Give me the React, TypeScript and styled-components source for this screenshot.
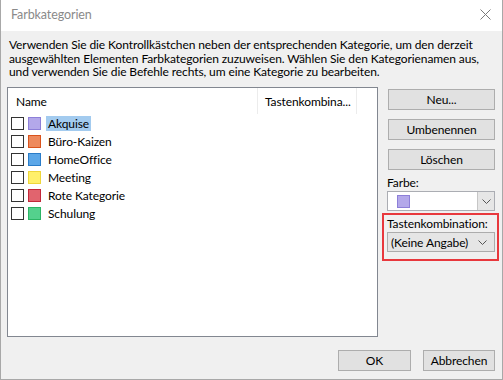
import styled, { createGlobalStyle } from "styled-components";

const GlobalStyle = createGlobalStyle`
    html, body {
        margin: 0;
        padding: 0;
        background: #ffffff;
    }
    * {
        box-sizing: border-box;
    }
`

const Window = styled.div`
    display: flex;
    flex-direction: column;
    width: 503px;
    height: 380px;
    border: 1px solid #a8a8a8;
    border-top: none;
    font-family: Lato, "Liberation Sans", sans-serif;
    font-size: 12px;
    letter-spacing: -0.1px;
    color: #000;
    overflow: hidden;
`

const TitleBar = styled.div`
    display: flex;
    align-items: center;
    justify-content: space-between;
    height: 31px;
    flex-shrink: 0;
    background: #ffffff;
    padding: 0 11px 2px 10px;
    color: #8a8a8a;
    font-size: 12.5px;
`

const CloseIcon = styled.svg`
    width: 11px;
    height: 11px;
`

const Body = styled.div`
    display: flex;
    flex-direction: column;
    flex: 1;
    background: #f0f0f0;
    padding: 7px 7px 8px 6px;
`

const Description = styled.p`
    margin: 0 0 8.5px 2px;
    line-height: 13.5px;
    height: 40.5px;
    white-space: nowrap;
`

const MainRow = styled.div`
    display: flex;
    flex: 1;
    gap: 9px;
    min-height: 0;
`

const ListBox = styled.div`
    display: flex;
    flex-direction: column;
    width: 371px;
    background: #ffffff;
    border: 1px solid #828790;
`

const HeaderRow = styled.div`
    display: flex;
    height: 26px;
`

const HeaderCell = styled.div<{ $width: number; $pad: number }>`
    width: ${p => p.$width}px;
    padding: 7px 0 0 ${p => p.$pad}px;
    border-right: 1px solid #ececec;
    line-height: 14px;
    white-space: nowrap;
`

const Rows = styled.div`
    display: flex;
    flex-direction: column;
    padding-left: 3px;
`

const Row = styled.div`
    display: flex;
    align-items: center;
    height: 18px;
`

const CheckBox = styled.span`
    width: 13px;
    height: 13px;
    border: 1px solid #333333;
    background: #ffffff;
    flex-shrink: 0;
`

const Swatch = styled.span<{ $fill: string; $line: string }>`
    width: 13px;
    height: 13px;
    margin-left: 4px;
    background: ${p => p.$fill};
    border: 1px solid ${p => p.$line};
    flex-shrink: 0;
`

const Label = styled.span<{ $selected?: boolean }>`
    margin-left: 5px;
    padding: 0 2px;
    height: 15px;
    line-height: 15px;
    background: ${p => (p.$selected ? "#a3cbef" : "transparent")};
`

const SideColumn = styled.div`
    display: flex;
    flex-direction: column;
    width: 108px;
    padding-top: 2px;
`

const ButtonGroup = styled.div`
    display: flex;
    flex-direction: column;
    gap: 9px;
    margin-bottom: 6px;
    padding-left: 1px;
`

const Button = styled.button<{ $width?: number }>`
    width: ${p => (p.$width ? `${p.$width}px` : "100%")};
    height: 21px;
    padding: 0;
    background: #e1e1e1;
    border: 1px solid #adadad;
    font-family: inherit;
    font-size: 12px;
    letter-spacing: -0.1px;
    color: #000;
`

const FieldLabel = styled.div`
    line-height: 14px;
    margin-bottom: 1px;
    white-space: nowrap;
`

const ColorSelect = styled.div`
    display: flex;
    height: 20px;
    background: #ffffff;
    border: 1px solid #abadb3;
`

const ColorValue = styled.div`
    flex: 1;
    display: flex;
    align-items: center;
    padding-left: 5px;
`

const SelectArrow = styled.div`
    display: flex;
    align-items: center;
    justify-content: center;
    width: 17px;
    background: #e6e6e6;
    border-left: 1px solid #c6c6c6;
`

const Highlight = styled.div`
    margin: 2px -4px 0 -5px;
    padding: 2px 2px 7px 3px;
    border: 2px solid #e8383d;
`

const ShortcutSelect = styled.div`
    display: flex;
    align-items: center;
    justify-content: space-between;
    height: 20px;
    margin-top: 1px;
    padding: 0 7px 0 3px;
    background: #e5e5e5;
    border: 1px solid #acacac;
    white-space: nowrap;
`

const Footer = styled.div`
    display: flex;
    justify-content: flex-end;
    gap: 12px;
    margin-top: 13px;
`

const Chevron = () => (
    <svg width="9" height="5" viewBox="0 0 9 5">
        <polyline points="0.5,0.5 4.5,4.5 8.5,0.5" fill="none" stroke="#555" strokeWidth="1" />
    </svg>
)

const categories = [
    { name: "Akquise", fill: "#b3a8ea", line: "#8d7fd8" },
    { name: "Büro-Kaizen", fill: "#ee8a5d", line: "#d9531c" },
    { name: "HomeOffice", fill: "#5ca7e8", line: "#2a7cc8" },
    { name: "Meeting", fill: "#fff06a", line: "#eed63a" },
    { name: "Rote Kategorie", fill: "#e1646e", line: "#c3283a" },
    { name: "Schulung", fill: "#54d18d", line: "#2cb565" },
]

function App(): JSX.Element {
    return (
        <>
        <GlobalStyle />
        <Window>
            <TitleBar>
                <span>Farbkategorien</span>
                <CloseIcon viewBox="0 0 11 11">
                    <path d="M0.5 0.5 L10.5 10.5 M10.5 0.5 L0.5 10.5" stroke="#7a7a7a" strokeWidth="1" />
                </CloseIcon>
            </TitleBar>
            <Body>
                <Description>
                    Verwenden Sie die Kontrollkästchen neben der entsprechenden Kategorie, um den derzeit<br />
                    ausgewählten Elementen Farbkategorien zuzuweisen. Wählen Sie den Kategorienamen aus,<br />
                    und verwenden Sie die Befehle rechts, um eine Kategorie zu bearbeiten.
                </Description>
                <MainRow>
                    <ListBox>
                        <HeaderRow>
                            <HeaderCell $width={250} $pad={8}>Name</HeaderCell>
                            <HeaderCell $width={99} $pad={7}>Tastenkombina...</HeaderCell>
                        </HeaderRow>
                        <Rows>
                            {categories.map((c, i) => (
                                <Row key={c.name}>
                                    <CheckBox />
                                    <Swatch $fill={c.fill} $line={c.line} />
                                    <Label $selected={i === 0}>{c.name}</Label>
                                </Row>
                            ))}
                        </Rows>
                    </ListBox>
                    <SideColumn>
                        <ButtonGroup>
                            <Button>Neu...</Button>
                            <Button>Umbenennen</Button>
                            <Button>Löschen</Button>
                        </ButtonGroup>
                        <FieldLabel>Farbe:</FieldLabel>
                        <ColorSelect>
                            <ColorValue>
                                <Swatch $fill="#b3a8ea" $line="#8d7fd8" />
                            </ColorValue>
                            <SelectArrow><Chevron /></SelectArrow>
                        </ColorSelect>
                        <Highlight>
                            <FieldLabel>Tastenkombination:</FieldLabel>
                            <ShortcutSelect>
                                <span>(Keine Angabe)</span>
                                <Chevron />
                            </ShortcutSelect>
                        </Highlight>
                    </SideColumn>
                </MainRow>
                <Footer>
                    <Button $width={73}>OK</Button>
                    <Button $width={72}>Abbrechen</Button>
                </Footer>
            </Body>
        </Window>
        </>
    )
}

export default App;
